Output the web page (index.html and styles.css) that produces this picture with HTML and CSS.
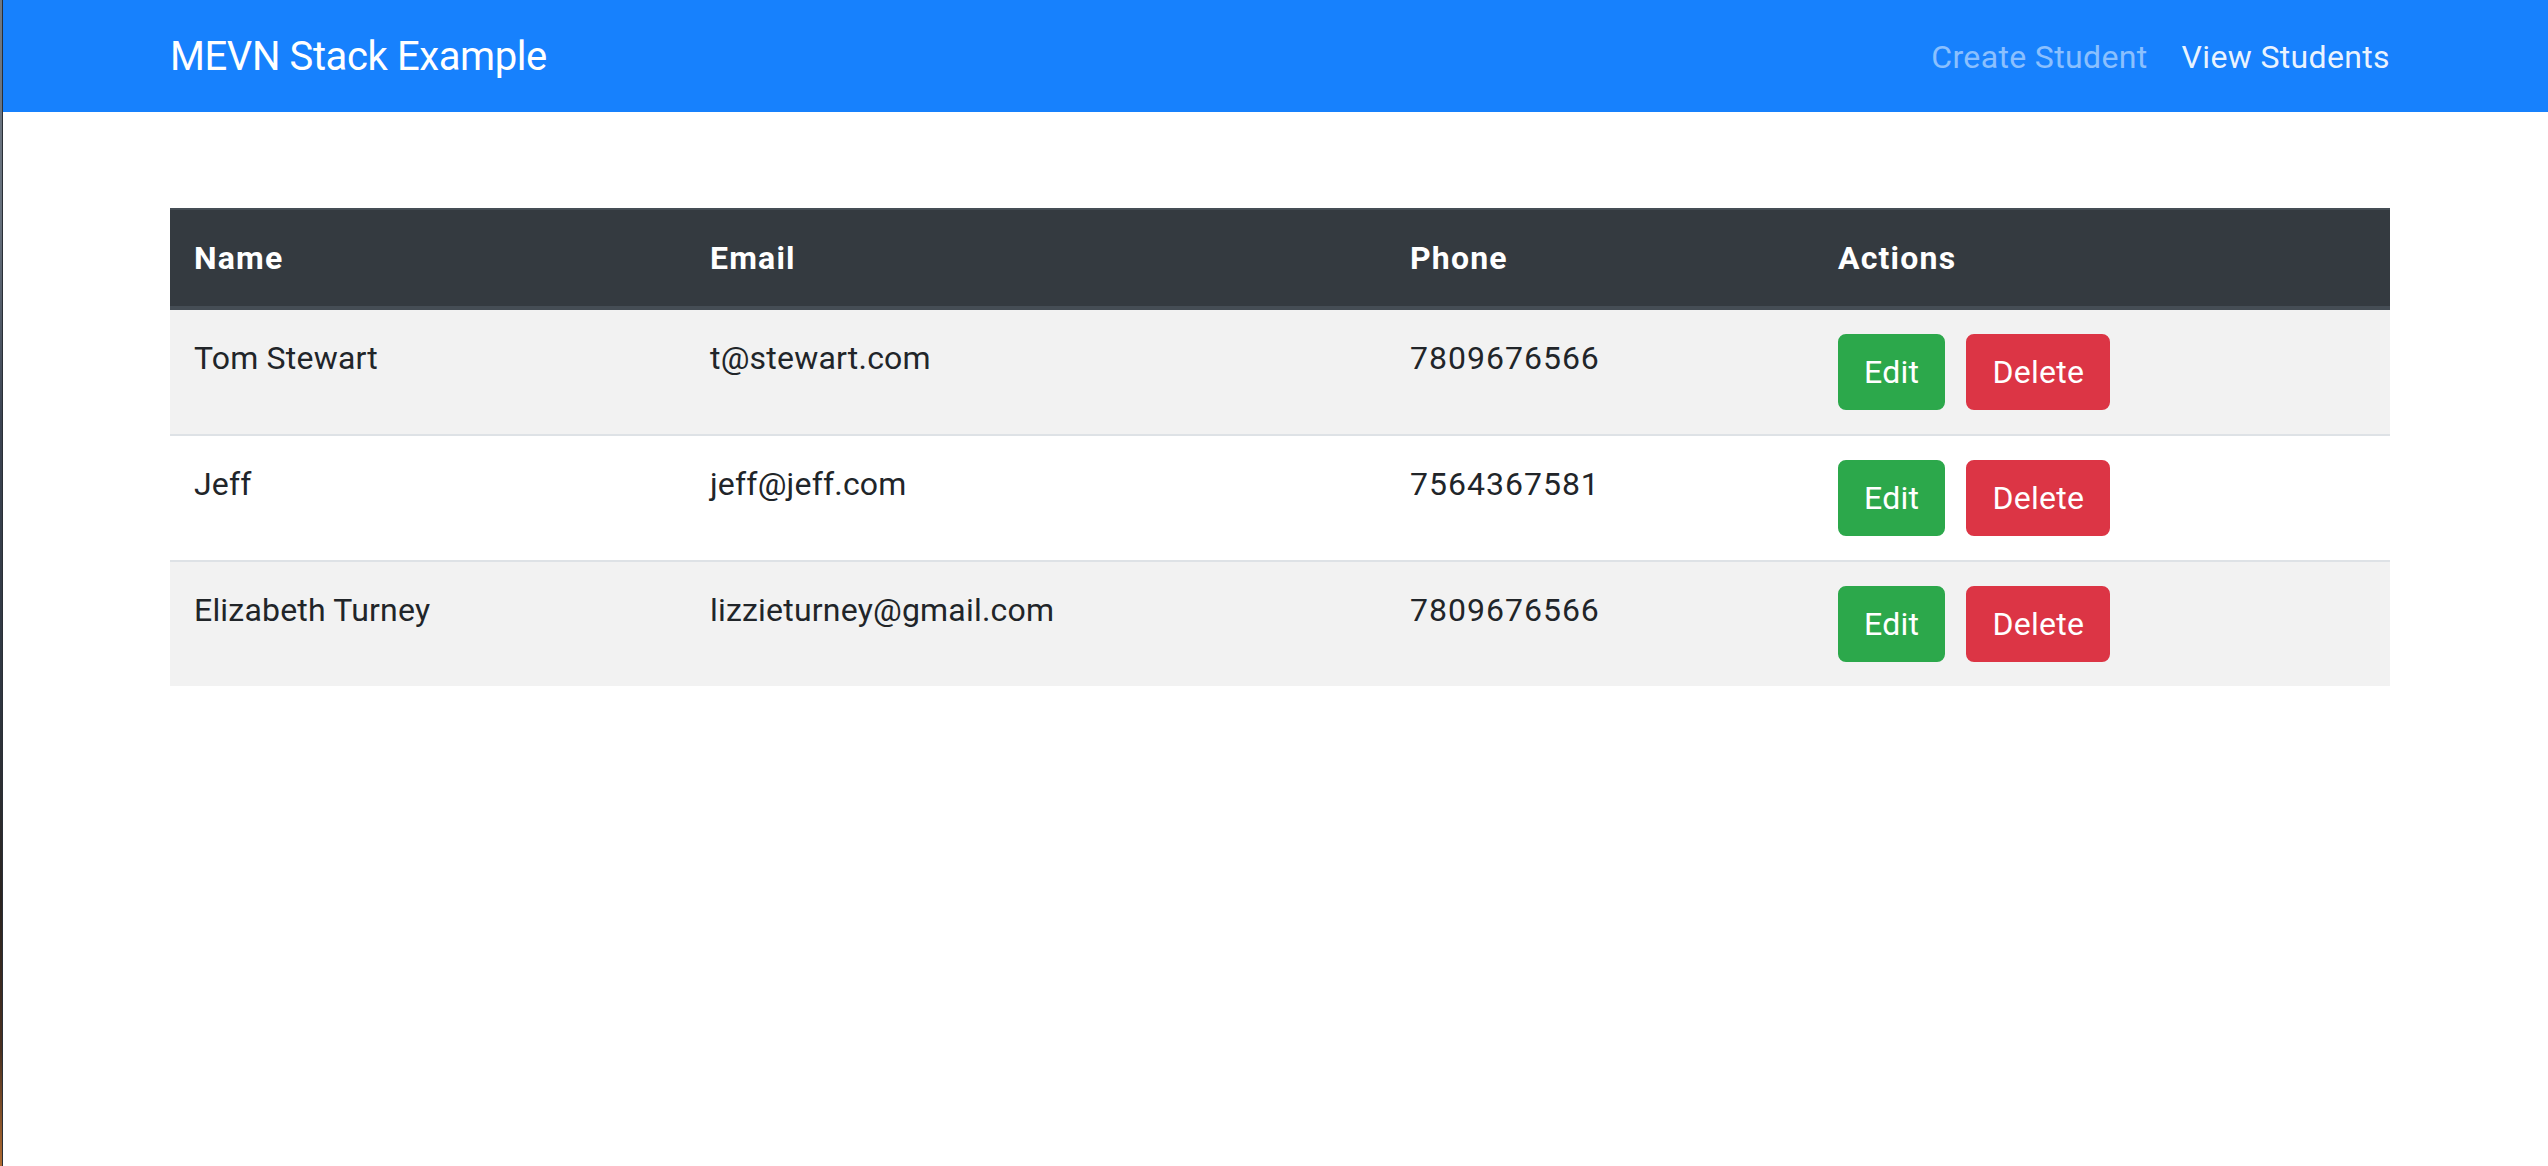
FILE: index.html
```html
<!DOCTYPE html>
<html lang="en">
<head>
<meta charset="utf-8">
<title>MEVN Stack Example</title>
<link rel="stylesheet" href="styles.css">
</head>
<body>
<div class="desk"></div>
<div class="app">
  <nav class="navbar">
    <div class="nav-inner">
      <a class="brand" href="#">MEVN Stack Example</a>
      <div class="nav-links">
        <a class="nav-link muted" href="#">Create Student</a>
        <a class="nav-link active" href="#">View Students</a>
      </div>
    </div>
  </nav>
  <main class="container">
    <table class="table">
      <thead>
        <tr>
          <th class="c-name">Name</th>
          <th class="c-email">Email</th>
          <th class="c-phone">Phone</th>
          <th class="c-actions">Actions</th>
        </tr>
      </thead>
      <tbody>
        <tr class="striped">
          <td>Tom Stewart</td>
          <td>t@stewart.com</td>
          <td class="phone">7809676566</td>
          <td><div class="actions"><a class="btn btn-success" href="#">Edit</a><button class="btn btn-danger">Delete</button></div></td>
        </tr>
        <tr>
          <td>Jeff</td>
          <td>jeff@jeff.com</td>
          <td class="phone">7564367581</td>
          <td><div class="actions"><a class="btn btn-success" href="#">Edit</a><button class="btn btn-danger">Delete</button></div></td>
        </tr>
        <tr class="striped">
          <td>Elizabeth Turney</td>
          <td>lizzieturney@gmail.com</td>
          <td class="phone">7809676566</td>
          <td><div class="actions"><a class="btn btn-success" href="#">Edit</a><button class="btn btn-danger">Delete</button></div></td>
        </tr>
      </tbody>
    </table>
  </main>
</div>
</body>
</html>
```
FILE: styles.css
```css
* { box-sizing: border-box; }
html, body { height: 100%; }
body {
  margin: 0;
  display: flex;
  font-family: Roboto, "Liberation Sans", Arial, sans-serif;
  font-size: 32px;
  line-height: 48px;
  color: #212529;
  background: #fff;
}
.desk {
  width: 3px;
  flex: none;
  background: linear-gradient(to bottom, #6f7883 0px, #66707c 220px, #3c4452 420px, #2f3640 700px, #2a2420 900px, #4a3020 1050px, #b06a30 1166px);
  border-right: 1px solid #2a2f36;
}
.app { flex: 1; min-width: 0; }
.navbar {
  background: #1781fd;
  height: 112px;
}
.nav-inner {
  width: 2220px;
  margin-left: 167px;
  height: 100%;
  display: flex;
  align-items: center;
  justify-content: space-between;
  padding-top: 2px;
}
.brand {
  color: #fff;
  text-decoration: none;
  font-size: 40px;
  line-height: 60px;
  letter-spacing: -0.4px;
}
.nav-links { display: flex; gap: 34px; }
.nav-link { text-decoration: none; font-size: 32px; line-height: 48px; letter-spacing: 0.35px; }
.nav-link.muted { color: rgba(255,255,255,.5); }
.nav-link.active { color: rgba(255,255,255,.92); }
.container {
  width: 2220px;
  margin-left: 167px;
  padding-top: 96px;
}
.table {
  width: 100%;
  border-collapse: collapse;
}
.table th, .table td {
  padding: 24px;
  text-align: left;
}
.table th {
  background: #343a40;
  color: #fff;
  font-weight: 700;
  letter-spacing: 1.2px;
  border-top: 2px solid #454d55;
  border-bottom: 4px solid #454d55;
  vertical-align: bottom;
}
.table td {
  border-top: 2px solid #dee2e6;
  vertical-align: top;
  letter-spacing: 0.2px;
}
.table td.phone { letter-spacing: 1px; }
.c-name { width: 516px; }
.c-email { width: 700px; }
.c-phone { width: 428px; }
.c-actions { width: 576px; }
.striped td { background: #f2f2f2; }
.actions { display: flex; gap: 21px; }
.btn {
  display: inline-block;
  font-family: inherit;
  font-size: 32px;
  line-height: 48px;
  padding: 12px 24px;
  border: 2px solid transparent;
  border-radius: 8px;
  color: #fff;
  text-decoration: none;
  letter-spacing: 0.3px;
  cursor: pointer;
}
.btn-success { background: #2ca84b; border-color: #2ca84b; }
.btn-danger { background: #dc3545; border-color: #dc3545; }
```
